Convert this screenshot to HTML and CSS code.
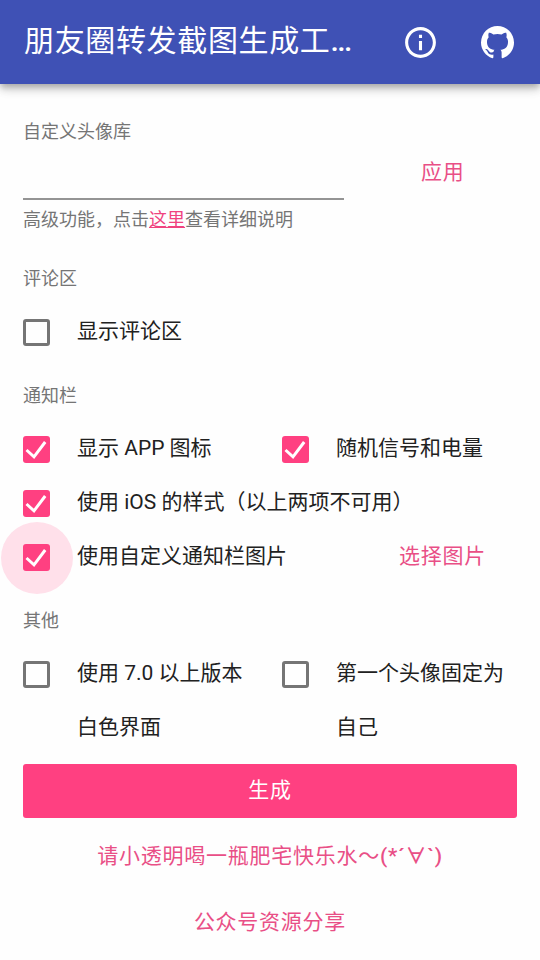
FILE: index.html
```html
<!DOCTYPE html>
<html lang="zh-CN">
<head>
<meta charset="utf-8">
<title>朋友圈转发截图生成工具</title>
<link rel="stylesheet" href="styles.css">
</head>
<body>
<header class="app-bar">
  <h1 class="title">朋友圈转发截图生成工<span class="ellipsis">...</span></h1>
  <a class="icon-button"><svg class="info-icon" viewBox="0 0 24 24"><path d="M11 17h2v-6h-2v6zm1-15C6.480 2 2 6.480 2 12s4.480 10 10 10 10-4.480 10-10S17.520 2 12 2zm0 18c-4.410 0-8-3.590-8-8s3.590-8 8-8 8 3.590 8 8-3.590 8-8 8zM11 9h2V7h-2v2z"/></svg></a>
  <a class="icon-button"><svg class="github-icon" viewBox="2 2 20 20"><path d="M12,2A10,10 0 0,0 2,12C2,16.420 4.870,20.170 8.840,21.500C9.340,21.580 9.500,21.270 9.500,21C9.500,20.770 9.500,20.140 9.500,19.310C6.730,19.910 6.140,17.970 6.140,17.970C5.680,16.810 5.030,16.500 5.030,16.500C4.120,15.880 5.100,15.900 5.100,15.900C6.100,15.970 6.630,16.930 6.630,16.930C7.500,18.450 8.970,18 9.540,17.760C9.630,17.110 9.890,16.670 10.170,16.420C7.950,16.170 5.620,15.310 5.620,11.500C5.620,10.390 6,9.500 6.650,8.790C6.550,8.540 6.200,7.500 6.750,6.150C6.750,6.150 7.590,5.880 9.500,7.170C10.290,6.950 11.150,6.840 12,6.840C12.850,6.840 13.710,6.950 14.500,7.170C16.410,5.880 17.250,6.150 17.250,6.150C17.800,7.500 17.450,8.540 17.350,8.790C18,9.500 18.380,10.390 18.380,11.500C18.380,15.320 16.040,16.160 13.810,16.410C14.170,16.720 14.500,17.330 14.500,18.260C14.500,19.600 14.500,20.680 14.500,21C14.500,21.270 14.660,21.590 15.170,21.500C19.140,20.160 22,16.420 22,12A10,10 0 0,0 12,2Z"/></svg></a>
</header>
<main class="content">
  <section class="avatar">
    <div class="field">
      <label class="caption" for="library">自定义头像库</label>
      <input class="input" id="library" type="text">
      <p class="caption helper">高级功能，点击<a class="link">这里</a>查看详细说明</p>
    </div>
    <a class="text-button apply">应用</a>
  </section>

  <h2 class="caption heading">评论区</h2>
  <div class="row">
    <label class="option"><span class="box"></span><span>显示评论区</span></label>
  </div>

  <h2 class="caption heading">通知栏</h2>
  <div class="row">
    <label class="option"><span class="box checked"><svg class="check" viewBox="0 0 27 27"><path d="M3.500 14 11 20.800 22.200 6"/></svg></span><span>显示 APP 图标</span></label>
    <label class="option"><span class="box checked"><svg class="check" viewBox="0 0 27 27"><path d="M3.500 14 11 20.800 22.200 6"/></svg></span><span>随机信号和电量</span></label>
  </div>
  <div class="row">
    <label class="option wide"><span class="box checked"><svg class="check" viewBox="0 0 27 27"><path d="M3.500 14 11 20.800 22.200 6"/></svg></span><span>使用 iOS 的样式（以上两项不可用）</span></label>
  </div>
  <div class="row">
    <label class="option custom"><span class="box checked focused"><svg class="check" viewBox="0 0 27 27"><path d="M3.500 14 11 20.800 22.200 6"/></svg></span><span>使用自定义通知栏图片</span></label>
    <a class="text-button">选择图片</a>
  </div>

  <h2 class="caption heading">其他</h2>
  <div class="row">
    <label class="option"><span class="box"></span><span>使用 7.0 以上版本白色界面</span></label>
    <label class="option"><span class="box"></span><span>第一个头像固定为自己</span></label>
  </div>

  <button class="generate">生成</button>
  <nav class="links">
    <a class="text-button">请小透明喝一瓶肥宅快乐水～<span class="face">(*´∀`)</span></a>
    <a class="text-button">公众号资源分享</a>
  </nav>
</main>
</body>
</html>
```
FILE: styles.css
```css
* {
  box-sizing: border-box;
}

body {
  margin: 0;
  height: 960px;
  overflow: hidden;
  background: #fefefe;
  color: #212121;
  font: 21px/54px Roboto, "Noto Sans CJK SC", sans-serif;
}

.app-bar {
  display: flex;
  align-items: center;
  height: 84px;
  padding: 0 24px;
  background: #3f51b5;
  color: #fff;
  box-shadow: 0 3px 6px -1px rgba(0, 0, 0, .2), 0 6px 8px rgba(0, 0, 0, .14), 0 1px 15px rgba(0, 0, 0, .12);
}

.title {
  flex: 1;
  margin: 0;
  padding-bottom: 3px;
  font-size: 30px;
  font-weight: 400;
  letter-spacing: .65px;
  white-space: nowrap;
}

.ellipsis {
  font-weight: 500;
  letter-spacing: -1.600px;
}

.icon-button {
  display: flex;
  margin-left: 42px;
}

.icon-button svg {
  display: block;
  fill: #fff;
}

.info-icon {
  width: 37px;
  height: 37px;
}

.github-icon {
  width: 33px;
  height: 33px;
  margin: 0 2px 0 .5px;
}

.content {
  padding: 34px 23px 0;
}

.avatar {
  display: flex;
  height: 147px;
}

.field {
  width: 321px;
}

.caption {
  display: block;
  margin: 0;
  color: #757575;
  font-size: 18px;
  font-weight: 400;
  line-height: 27px;
}

.input {
  display: block;
  width: 100%;
  height: 55px;
  border: 0;
  border-bottom: 2px solid #949494;
  background: none;
}

.helper {
  margin-top: 6px;
}

.link {
  color: #f0437f;
  text-decoration: underline;
}

.text-button {
  color: #e94f86;
  letter-spacing: .75px;
  white-space: nowrap;
}

.row .text-button {
  line-height: 52px;
}

.face {
  font-weight: 500;
}

.apply {
  margin: 27px 0 0 77px;
}

.heading {
  height: 40px;
}

.row {
  display: flex;
}

.row + .heading {
  margin-top: 23px;
}

.option {
  display: flex;
  width: 259px;
  margin: -1px 0 1px;
  padding-right: 32px;
}

.option:nth-child(2) {
  width: 235px;
  padding-right: 12px;
}

.option.wide {
  width: 100%;
}

.option.custom {
  width: 376px;
}

.box {
  flex: none;
  width: 27px;
  height: 27px;
  margin: 15px 27px 0 0;
  border: 3px solid #757575;
  border-radius: 3px;
}

.checked {
  border: 0;
  background: #ff4081;
}

.focused {
  position: relative;
}

.focused::before {
  content: "";
  position: absolute;
  z-index: -1;
  inset: -22.500px;
  border-radius: 50%;
  background: #ffe0ea;
}

.check {
  display: block;
  width: 27px;
  height: 27px;
  fill: none;
  stroke: #fff;
  stroke-width: 3;
}

.generate {
  display: block;
  width: 100%;
  height: 54px;
  margin-top: 9px;
  padding: 0 0 2px;
  border: 0;
  border-radius: 3px;
  background: #ff4081;
  color: #fff;
  font: inherit;
  line-height: 50px;
  letter-spacing: .75px;
}

.links {
  display: flex;
  flex-direction: column;
  align-items: center;
  gap: 12px;
  padding-top: 11px;
}
```
